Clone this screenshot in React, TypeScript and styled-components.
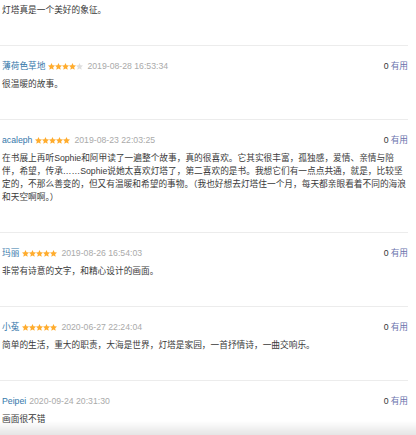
import styled, { createGlobalStyle } from "styled-components";

type Comment = {
  user?: string;
  stars?: number;
  time?: string;
  votes?: number;
  text: string;
};

const comments: Comment[] = [
  { text: "灯塔真是一个美好的象征。" },
  {
    user: "薄荷色草地",
    stars: 4,
    time: "2019-08-28 16:53:34",
    votes: 0,
    text: "很温暖的故事。",
  },
  {
    user: "acaleph",
    stars: 5,
    time: "2019-08-23 22:03:25",
    votes: 0,
    text: "在书展上再听Sophie和阿甲读了一遍整个故事，真的很喜欢。它其实很丰富，孤独感，爱情、亲情与陪伴，希望，传承……Sophie说她太喜欢灯塔了，第二喜欢的是书。我想它们有一点点共通，就是，比较坚定的，不那么善变的，但又有温暖和希望的事物。（我也好想去灯塔住一个月，每天都亲眼看着不同的海浪和天空啊啊。）",
  },
  {
    user: "玛丽",
    stars: 5,
    time: "2019-08-26 16:54:03",
    votes: 0,
    text: "非常有诗意的文字，和精心设计的画面。",
  },
  {
    user: "小菟",
    stars: 5,
    time: "2020-06-27 22:24:04",
    votes: 0,
    text: "简单的生活，重大的职责，大海是世界，灯塔是家园，一首抒情诗，一曲交响乐。",
  },
  {
    user: "Peipei",
    time: "2020-09-24 20:31:30",
    votes: 0,
    text: "画面很不错",
  },
];

const GlobalStyle = createGlobalStyle`
  html, body {
    margin: 0;
    padding: 0;
    background: #fff;
  }
  body {
    font-family: "Liberation Sans", Arial, "Noto Sans CJK SC", sans-serif;
    color: #333;
    overflow: hidden;
  }
`;

const List = styled.div`
  width: 408px;
`;

const Item = styled.div<{ $first?: boolean }>`
  padding: ${(p) => (p.$first ? "4px" : "14px")} 0 28px 2px;
  border-bottom: 1px solid #ececec;
`;

const Header = styled.div`
  display: flex;
  align-items: center;
  height: 13px;
  margin-bottom: 5px;
  font-size: 8.7px;
  line-height: 13px;
`;

const User = styled.span`
  color: #3377aa;
  margin-right: 3px;
`;

const Stars = styled.span`
  display: inline-flex;
  margin-right: 4px;
`;

const Time = styled.span`
  color: #aaaaaa;
  font-size: 8.7px;
`;

const Votes = styled.span`
  margin-left: auto;
  color: #333;
  font-size: 8.7px;
  & > a {
    color: #6a72ad;
    margin-left: 2px;
    text-decoration: none;
  }
`;

const Body = styled.p`
  margin: 0;
  font-size: 8.7px;
  line-height: 13px;
  color: #3a3a3a;
  padding-right: 2px;
`;

const Shade = styled.div`
  position: fixed;
  left: 0;
  right: 0;
  bottom: 0;
  height: 14px;
  background: linear-gradient(to bottom, rgba(0, 0, 0, 0), rgba(0, 0, 0, 0.1));
  pointer-events: none;
`;

const Star = ({ on }: { on: boolean }) => (
  <svg width="7" height="7" viewBox="0 0 24 24">
    <path
      d="M12 0l3.6 7.8 8.4.9-6.3 5.7 1.8 8.4L12 18.5 4.5 22.8l1.8-8.4L0 8.7l8.4-.9z"
      fill={on ? "#ffac2d" : "#dedede"}
    />
  </svg>
);

export default function App() {
  return (
    <>
      <GlobalStyle />
      <List>
        {comments.map((c, i) => (
          <Item key={i} $first={!c.user}>
            {c.user && (
              <Header>
                <User>{c.user}</User>
                {c.stars !== undefined && (
                  <Stars>
                    {[0, 1, 2, 3, 4].map((s) => (
                      <Star key={s} on={s < (c.stars ?? 0)} />
                    ))}
                  </Stars>
                )}
                <Time>{c.time}</Time>
                <Votes>
                  {c.votes}
                  <a href="#">有用</a>
                </Votes>
              </Header>
            )}
            <Body>{c.text}</Body>
          </Item>
        ))}
      </List>
      <Shade />
    </>
  );
}
